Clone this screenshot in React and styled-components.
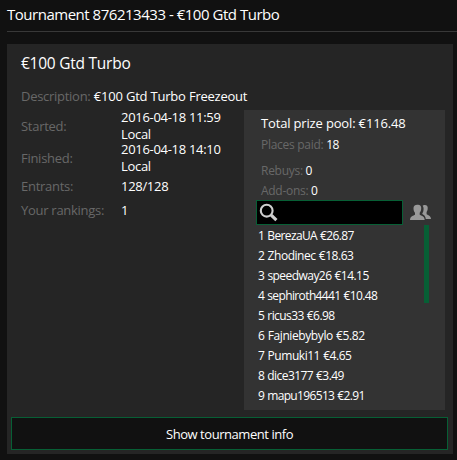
import React from "react";
import styled, { createGlobalStyle } from "styled-components";

const GreenColor = "#075f35";
const MutedColor = "#686868";

const GlobalStyle = createGlobalStyle`
  * {
    box-sizing: border-box;
  }

  body {
    margin: 0;
    background-color: #111111;
    color: white;
    font-family: "Open Sans", "Noto Sans", sans-serif;
    overflow: hidden;
  }
`;

const Page = styled.div`
  width: 457px;
  height: 460px;
  padding-left: 7px;
`;

const Header = styled.h1`
  height: 32px;
  margin: 0 0 12px;
  padding-top: 4px;
  border-bottom: 1px solid #383838;
  font-size: 15px;
  font-weight: 400;
  line-height: 20px;
  letter-spacing: -0.48px;
  white-space: nowrap;
`;

const Card = styled.div`
  width: 446px;
  height: 410px;
  padding: 8px 4px 4px;
  display: flex;
  flex-direction: column;
  background-color: #252525;
`;

const Title = styled.h2`
  margin: 0 0 0 10px;
  font-size: 15.5px;
  font-weight: 400;
  line-height: 22px;
  letter-spacing: -0.25px;
`;

const Description = styled.p`
  margin: 12px 0 3px 10px;
  font-size: 13px;
  line-height: 21px;
  letter-spacing: -0.24px;
  word-spacing: 0.2px;
  white-space: nowrap;
`;

const Label = styled.span`
  color: ${MutedColor};
  letter-spacing: -0.28px;
`;

const Columns = styled.div`
  display: flex;
  height: 300px;
  padding-left: 10px;
`;

const Details = styled.div`
  width: 223px;
  display: grid;
  grid-template-columns: 100px 110px;
  grid-template-rows: 32px 32px 24px 25px;
  align-items: center;
  align-content: start;
  font-size: 13px;
  line-height: 17px;
`;

const Value = styled.span`
  letter-spacing: -0.3px;
`;

const Panel = styled.div`
  width: 201px;
  padding-top: 2px;
  background-color: #333333;
`;

const PrizePool = styled.div`
  margin-bottom: 1px;
  padding-left: 17px;
  font-size: 13px;
  line-height: 22px;
  letter-spacing: -0.16px;
`;

const Stat = styled.div`
  height: 20px;
  margin-bottom: ${({ $gap }) => $gap || "0"};
  padding-left: 17px;
  font-size: 12px;
  line-height: 20px;
  letter-spacing: -0.4px;
`;

const SearchRow = styled.div`
  display: flex;
  align-items: center;
  gap: 7px;
  height: 25px;
  margin-top: -1px;
  padding-left: 12px;
`;

const Search = styled.div`
  width: 147px;
  height: 25px;
  padding: 2px;
  border: 1px solid ${GreenColor};
  background-color: black;

  svg {
    display: block;
  }
`;

const Results = styled.div`
  display: flex;
  justify-content: space-between;
  height: 180px;
  padding: 0 16px 0 14px;
`;

const List = styled.ul`
  margin: 1px 0 0;
  padding: 0;
  list-style: none;
  font-size: 12px;
  line-height: 20px;
  word-spacing: 0.5px;
`;

const Player = styled.li`
  height: 20px;
  letter-spacing: ${({ $track }) => $track};
  white-space: nowrap;
`;

const ScrollThumb = styled.div`
  width: 5px;
  height: 78px;
  background-color: ${GreenColor};
`;

const InfoButton = styled.button`
  width: 437px;
  height: 33px;
  margin-top: auto;
  padding: 0;
  border: 1px solid ${GreenColor};
  background-color: #111111;
  color: white;
  font-family: inherit;
  font-size: 13px;
  letter-spacing: -0.45px;
`;

const players = [
  { name: "BerezaUA", prize: "€26.87", track: "-0.62px" },
  { name: "Zhodinec", prize: "€18.63", track: "-0.46px" },
  { name: "speedway26", prize: "€14.15", track: "-0.55px" },
  { name: "sephiroth4441", prize: "€10.48", track: "-0.62px" },
  { name: "ricus33", prize: "€6.98", track: "-0.58px" },
  { name: "Fajniebybylo", prize: "€5.82", track: "-0.4px" },
  { name: "Pumuki11", prize: "€4.65", track: "-0.46px" },
  { name: "dice3177", prize: "€3.49", track: "-0.58px" },
  { name: "mapu196513", prize: "€2.91", track: "-0.65px" },
];

const SearchIcon = () => (
  <svg width="19" height="19" viewBox="0 0 19 19" fill="none" stroke="#d0d0d0">
    <circle cx="7.7" cy="7.7" r="5.9" strokeWidth="2.1" />
    <path d="M12.2 12.2L17.4 17.2" strokeWidth="3.2" />
  </svg>
);

const PlayersIcon = () => (
  <svg width="21" height="17" viewBox="0 0 21 17" fill="#999999">
    <path d="M14 1C16.7 .6 18 2 17.7 4.6C17.6 6.3 17.2 7.2 16.6 8V10.2C18 11.2 20.8 11.4 21 15H15.8C15.4 12.2 14.4 11.2 12.9 10.5L12.2 9.6C13.7 7.8 14.2 3.6 12.6 1.7Z" />
    <path d="M7.3 .8C9.8 .4 11.5 2 11.2 4.6C11.1 6.7 10.5 7.8 9.7 8.8V10.7C11 11.8 14.5 11.7 14.7 16H0C.2 11.7 3.7 11.8 5 10.7V8.8C4.1 7.8 3.6 6.7 3.5 4.6C3.3 2.2 4.8 .8 7.3 .8Z" />
  </svg>
);

export default function App() {
  return (
    <>
      <GlobalStyle />
      <Page>
        <Header>Tournament 876213433 - €100 Gtd Turbo</Header>
        <Card>
          <Title>€100 Gtd Turbo</Title>
          <Description>
            <Label>Description:</Label> €100 Gtd Turbo Freezeout
          </Description>
          <Columns>
            <Details>
              <Label>Started:</Label>
              <Value>
                2016-04-18 11:59
                <br />
                Local
              </Value>
              <Label>Finished:</Label>
              <Value>
                2016-04-18 14:10
                <br />
                Local
              </Value>
              <Label>Entrants:</Label>
              <Value>128/128</Value>
              <Label>Your rankings:</Label>
              <Value>1</Value>
            </Details>
            <Panel>
              <PrizePool>Total prize pool: €116.48</PrizePool>
              <Stat $gap="6px">
                <Label>Places paid:</Label> 18
              </Stat>
              <Stat>
                <Label>Rebuys:</Label> 0
              </Stat>
              <Stat>
                <Label>Add-ons:</Label> 0
              </Stat>
              <SearchRow>
                <Search>
                  <SearchIcon />
                </Search>
                <PlayersIcon />
              </SearchRow>
              <Results>
                <List>
                  {players.map((player, index) => (
                    <Player key={player.name} $track={player.track}>
                      {index + 1} {player.name} {player.prize}
                    </Player>
                  ))}
                </List>
                <ScrollThumb />
              </Results>
            </Panel>
          </Columns>
          <InfoButton>Show tournament info</InfoButton>
        </Card>
      </Page>
    </>
  );
}
